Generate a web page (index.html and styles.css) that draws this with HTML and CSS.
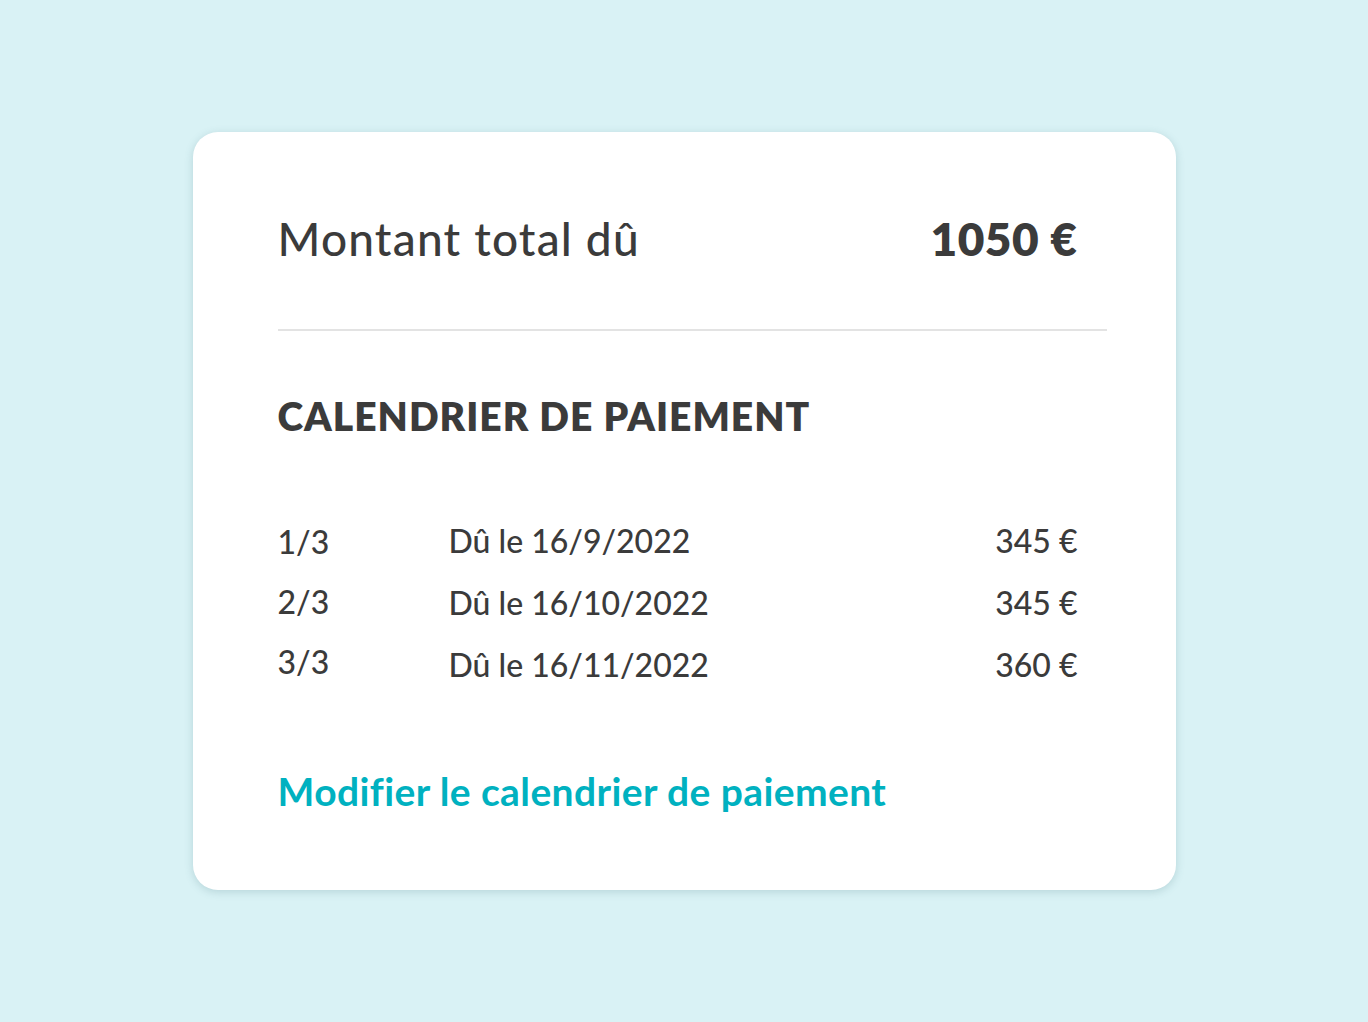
FILE: index.html
```html
<!DOCTYPE html>
<html lang="fr">
<head>
<meta charset="utf-8">
<link rel="stylesheet" href="styles.css">
</head>
<body>
<main class="page">
  <section class="card">
    <div class="total">
      <span class="total-label">Montant total dû</span>
      <span class="total-amount">1050 €</span>
    </div>
    <hr class="divider">
    <h2 class="heading">CALENDRIER DE PAIEMENT</h2>
    <div class="schedule">
      <div class="col col-index">
        <span>1/3</span>
        <span>2/3</span>
        <span>3/3</span>
      </div>
      <div class="col col-date">
        <span>Dû le 16/9/2022</span>
        <span>Dû le 16/10/2022</span>
        <span>Dû le 16/11/2022</span>
      </div>
      <div class="col col-amount">
        <span>345 €</span>
        <span>345 €</span>
        <span>360 €</span>
      </div>
    </div>
    <a class="link" href="#">Modifier le calendrier de paiement</a>
  </section>
</main>
</body>
</html>
```
FILE: styles.css
```css
html, body {
  margin: 0;
  padding: 0;
}
body {
  background: #d9f2f5;
  font-family: "Lato", "Open Sans", sans-serif;
  color: #3b3b3b;
}
.page {
  width: 1368px;
  height: 1022px;
  display: flex;
  align-items: center;
  justify-content: center;
}
.card {
  box-sizing: border-box;
  width: 983px;
  height: 758px;
  background: #ffffff;
  border-radius: 25px;
  box-shadow: 0 2px 8px rgba(60, 110, 120, 0.22);
  padding: 80px 69px 0 85px;
  display: flex;
  flex-direction: column;
}
.total {
  display: flex;
  justify-content: space-between;
  align-items: baseline;
  padding-right: 29px;
  font-size: 46px;
  line-height: 54px;
}
.total-label {
  font-weight: 500;
  letter-spacing: 1.2px;
}
.total-amount {
  font-weight: 800;
  letter-spacing: 0.5px;
}
.divider {
  border: 0;
  height: 2px;
  background: #e3e3e3;
  margin: 63px 0 0 0;
}
.heading {
  margin: 62px 0 0 0;
  font-size: 39px;
  line-height: 46px;
  font-weight: 800;
  letter-spacing: 1px;
}
.schedule {
  display: flex;
  margin-top: 84px;
  padding-right: 29px;
  font-size: 32px;
  line-height: 36px;
  font-weight: 500;
}
.col {
  display: flex;
  flex-direction: column;
}
.col-index {
  width: 171px;
  gap: 24px;
  padding-top: 1px;
}
.col-date {
  flex: 1;
  gap: 26px;
}
.col-amount {
  align-items: flex-end;
  gap: 26px;
}
.link {
  margin-top: 86px;
  align-self: flex-start;
  color: #00b1c0;
  text-decoration: none;
  font-size: 39px;
  line-height: 44px;
  font-weight: 700;
  letter-spacing: 0.4px;
}
```
